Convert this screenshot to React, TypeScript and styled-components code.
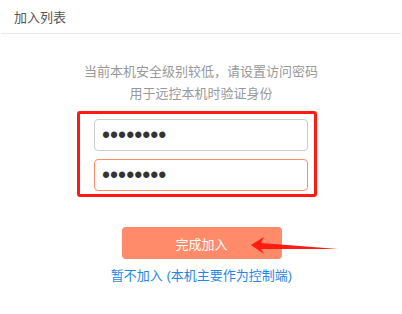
import React from 'react';
import styled, {createGlobalStyle} from 'styled-components';

const GlobalStyle = createGlobalStyle`
    html, body {
        margin: 0;
        padding: 0;
        background: #fff;
    }
    body {
        font-family: "Liberation Sans", "Noto Sans CJK SC", sans-serif;
    }
`;

const Page = styled.div`
    position: relative;
    width: 402px;
    height: 314px;
    overflow: hidden;
    background: #fff;
`;

const Header = styled.div`
    height: 33px;
    display: flex;
    align-items: center;
    padding-left: 13px;
    font-size: 13px;
    color: #555;
    border-bottom: 1px solid #e8e8e8;
    margin: 0 1px;
`;

const Hint = styled.div`
    margin-top: 27px;
    text-align: center;
    font-size: 13px;
    line-height: 22px;
    color: #999;
`;

const Highlight = styled.div`
    margin: 6px 0 0 77px;
    width: 240px;
    box-sizing: border-box;
    border: 3px solid #ff1a12;
    border-radius: 3px;
    padding: 5px 6px 3px 14px;
    display: flex;
    flex-direction: column;
    gap: 8px;
`;

const PasswordInput = styled.input<{ $active?: boolean }>`
    box-sizing: border-box;
    width: 214px;
    height: 32px;
    padding: 0 7px;
    border: 1px solid ${({$active}) => ($active ? '#ff8c69' : '#ccc')};
    border-radius: 4px;
    outline: none;
    font-family: "Liberation Sans", sans-serif;
    font-size: 23px;
    letter-spacing: 0;
    color: #333;
    background: #fff;
`;

const Actions = styled.div`
    margin-top: 30px;
    display: flex;
    flex-direction: column;
    align-items: center;
`;

const SubmitButton = styled.button`
    width: 160px;
    height: 32px;
    margin-left: 1px;
    border: none;
    border-radius: 4px;
    background: #ff8b6b;
    color: #fff;
    font-family: "Liberation Sans", "Noto Sans CJK SC", sans-serif;
    font-size: 13px;
    cursor: pointer;
`;

const SkipLink = styled.a`
    margin-top: 8px;
    margin-left: 1px;
    font-size: 13px;
    line-height: 18px;
    color: #1e88e5;
    text-decoration: none;
    cursor: pointer;
`;

const Arrow = styled.svg`
    position: absolute;
    left: 0;
    top: 0;
    pointer-events: none;
`;

export default function App() {
    return (
        <Page>
            <GlobalStyle/>
            <Header>{'加入列表'}</Header>
            <Hint>
                <div>{'当前本机安全级别较低，请设置访问密码'}</div>
                <div>{'用于远控本机时验证身份'}</div>
            </Hint>
            <Highlight>
                <PasswordInput
                    type='password'
                    value='12345678'
                    readOnly={true}
                />
                <PasswordInput
                    $active={true}
                    type='password'
                    value='12345678'
                    readOnly={true}
                />
            </Highlight>
            <Actions>
                <SubmitButton>{'完成加入'}</SubmitButton>
                <SkipLink>{'暂不加入 (本机主要作为控制端)'}</SkipLink>
            </Actions>
            <Arrow
                width='402'
                height='314'
                viewBox='0 0 402 314'
            >
                <polygon
                    points='251,245 264,237 261,243 338,249 261,249 264,254'
                    fill='#ff1a12'
                />
            </Arrow>
        </Page>
    );
}
